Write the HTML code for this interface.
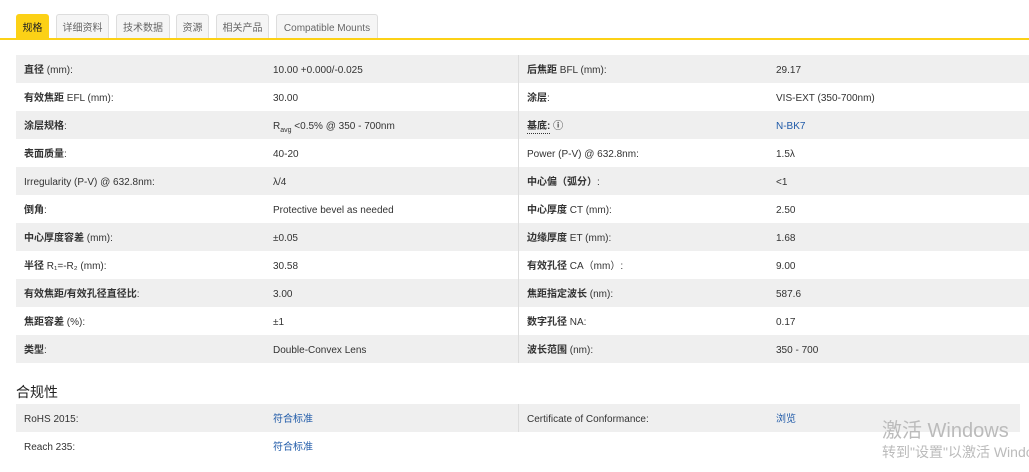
<!DOCTYPE html>
<html><head><meta charset="utf-8"><style>
*{margin:0;padding:0;box-sizing:border-box}
body{width:1029px;height:472px;background:#fff;font-family:"Liberation Sans","Noto Sans CJK SC",sans-serif;color:#333;font-size:10px;position:relative;overflow:hidden}
.tab{position:absolute;top:14px;height:25px;border:1px solid #ddd;border-bottom:none;background:#f5f5f5;border-radius:3px 3px 0 0;font-size:10px;color:#666;line-height:28px;text-align:center}
.tab.a{background:#fcd116;border-color:#fcd116;color:#222}
.line{position:absolute;left:0;top:38px;width:1029px;height:2px;background:#fcd116}
.row{position:absolute;left:16px;width:1013px;height:28px;line-height:31px}
.g{background:#efefef}
.row span{position:absolute;top:0;white-space:nowrap}
.l1{left:8px}.v1{left:257px}.l2{left:511px}.v2{left:760px}
.div{position:absolute;left:518px;top:55px;width:1px;height:308px;background:#ddd}
b{font-weight:bold}
a{color:#1f5aa8;text-decoration:none}
h3{position:absolute;left:16px;top:382px;font-size:14px;font-weight:normal;color:#222}
.wm{position:absolute;left:882px;color:#bbb;white-space:nowrap}
</style></head><body>
<div class="tab a" style="left:16px;width:33px">规格</div>
<div class="tab" style="left:56px;width:53px">详细资料</div>
<div class="tab" style="left:116px;width:54px">技术数据</div>
<div class="tab" style="left:176px;width:33px">资源</div>
<div class="tab" style="left:216px;width:53px">相关产品</div>
<div class="tab" style="left:276px;width:102px">Compatible Mounts</div>
<div class="line"></div>

<div class="row g" style="top:55px"><span class="l1"><b>直径</b> (mm):</span><span class="v1">10.00 +0.000/-0.025</span><span class="l2"><b>后焦距</b> BFL (mm):</span><span class="v2">29.17</span></div>
<div class="row" style="top:83px"><span class="l1"><b>有效焦距</b> EFL (mm):</span><span class="v1">30.00</span><span class="l2"><b>涂层</b>:</span><span class="v2">VIS-EXT (350-700nm)</span></div>
<div class="row g" style="top:111px"><span class="l1"><b>涂层规格</b>:</span><span class="v1">R<sub style="font-size:7px">avg</sub> &lt;0.5% @ 350 - 700nm</span><span class="l2"><b style="border-bottom:1px dotted #333;line-height:12px;display:inline-block">基底:</b> <b>ⓘ</b></span><span class="v2"><a>N-BK7</a></span></div>
<div class="row" style="top:139px"><span class="l1"><b>表面质量</b>:</span><span class="v1">40-20</span><span class="l2">Power (P-V) @ 632.8nm:</span><span class="v2">1.5λ</span></div>
<div class="row g" style="top:167px"><span class="l1">Irregularity (P-V) @ 632.8nm:</span><span class="v1">λ/4</span><span class="l2"><b>中心偏（弧分）</b>:</span><span class="v2">&lt;1</span></div>
<div class="row" style="top:195px"><span class="l1"><b>倒角</b>:</span><span class="v1">Protective bevel as needed</span><span class="l2"><b>中心厚度</b> CT (mm):</span><span class="v2">2.50</span></div>
<div class="row g" style="top:223px"><span class="l1"><b>中心厚度容差</b> (mm):</span><span class="v1">±0.05</span><span class="l2"><b>边缘厚度</b> ET (mm):</span><span class="v2">1.68</span></div>
<div class="row" style="top:251px"><span class="l1"><b>半径</b> R₁=-R₂ (mm):</span><span class="v1">30.58</span><span class="l2"><b>有效孔径</b> CA（mm）:</span><span class="v2">9.00</span></div>
<div class="row g" style="top:279px"><span class="l1"><b>有效焦距/有效孔径直径比</b>:</span><span class="v1">3.00</span><span class="l2"><b>焦距指定波长</b> (nm):</span><span class="v2">587.6</span></div>
<div class="row" style="top:307px"><span class="l1"><b>焦距容差</b> (%):</span><span class="v1">±1</span><span class="l2"><b>数字孔径</b> NA:</span><span class="v2">0.17</span></div>
<div class="row g" style="top:335px"><span class="l1"><b>类型</b>:</span><span class="v1">Double-Convex Lens</span><span class="l2"><b>波长范围</b> (nm):</span><span class="v2">350 - 700</span></div>
<div class="div"></div>

<h3>合规性</h3>
<div class="row g" style="top:404px;width:1004px"><span class="l1">RoHS 2015:</span><span class="v1"><a>符合标准</a></span><span class="l2">Certificate of Conformance:</span><span class="v2"><a>浏览</a></span></div>
<div style="position:absolute;left:518px;top:404px;width:1px;height:28px;background:#ddd"></div>
<div class="row" style="top:432px"><span class="l1">Reach 235:</span><span class="v1"><a>符合标准</a></span></div>
<div class="wm" style="top:414px;font-size:20px">激活 Windows</div>
<div class="wm" style="top:442px;font-size:14px">转到"设置"以激活 Windows。</div>
</body></html>
